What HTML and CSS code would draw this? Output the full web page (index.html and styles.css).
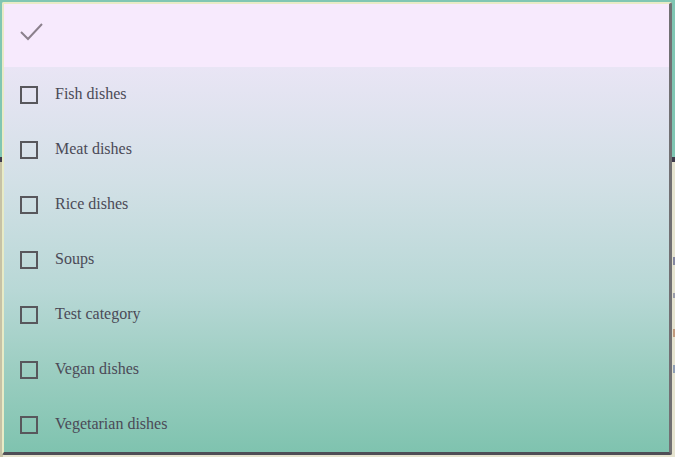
FILE: index.html
```html
<!DOCTYPE html>
<html>
<head>
<meta charset="utf-8">
<link rel="stylesheet" href="styles.css">
</head>
<body>
<div class="page">
  <header class="page-top"></header>
  <div class="page-bar"></div>
  <main class="page-content">
    <div class="bg-line"><span class="frag frag-a"></span><span class="frag frag-b"></span></div>
    <div class="bg-line"><span class="frag frag-c"></span></div>
    <div class="bg-line"><span class="frag frag-d"></span></div>
    <div class="bg-line"><span class="frag frag-e"></span></div>
  </main>
</div>

<div class="menu">
  <div class="menu-head">
    <svg class="check" width="24" height="20" viewBox="0 0 24 20">
      <polyline points="1,11 8,18 22,3" fill="none" stroke="#8b808c" stroke-width="2"/>
    </svg>
  </div>
  <ul class="menu-list">
    <li class="item"><span class="box"></span><span class="label">Fish dishes</span></li>
    <li class="item"><span class="box"></span><span class="label">Meat dishes</span></li>
    <li class="item"><span class="box"></span><span class="label">Rice dishes</span></li>
    <li class="item"><span class="box"></span><span class="label">Soups</span></li>
    <li class="item"><span class="box"></span><span class="label">Test category</span></li>
    <li class="item"><span class="box"></span><span class="label">Vegan dishes</span></li>
    <li class="item"><span class="box"></span><span class="label">Vegetarian dishes</span></li>
  </ul>
</div>
</body>
</html>
```

FILE: styles.css
```css
html, body {
  margin: 0;
  padding: 0;
}
body {
  width: 675px;
  height: 457px;
  overflow: hidden;
  font-family: "Liberation Serif", "DejaVu Serif", serif;
  position: relative;
  background: #e4e2cd;
}
.page {
  display: flex;
  flex-direction: column;
  height: 457px;
}
.page-top {
  height: 157px;
  background: #80c6b3;
}
.page-bar {
  height: 5px;
  background: #3f3b4c;
}
.page-content {
  flex: 1;
  background: #e6e4d0;
  border-left: 3px solid #c6c2a6;
  padding-top: 95px;
  display: flex;
  flex-direction: column;
  gap: 22px;
}
.bg-line {
  display: flex;
  height: 14px;
}
.frag {
  display: block;
  width: 2px;
  height: 8px;
  opacity: 0.7;
}
.frag-a { background: #7a5a78; }
.frag-b { background: #5a5f8a; margin-left: auto; }
.frag-c { background: #7a7f9a; margin-left: auto; height: 5px; }
.frag-d { background: #b07a5a; margin-left: auto; }
.frag-e { background: #6a80a8; margin-left: auto; }

.menu {
  position: absolute;
  left: 2px;
  top: 2px;
  width: 665px;
  border-left: 2px solid #e8ebc6;
  border-top: 2px solid #e8ebc6;
  border-right: 3px solid #717073;
  border-bottom: 3px solid #4f4e56;
  border-radius: 2px;
  background: #f7eafd;
}
.menu-head {
  height: 63px;
  background: #f7eafd;
  display: flex;
  align-items: flex-start;
  padding: 17px 0 0 16px;
  box-sizing: border-box;
}
.check {
  display: block;
}
.menu-list {
  list-style: none;
  margin: 0;
  padding: 0;
  background: linear-gradient(to bottom, #e9e5f5 0%, #d2e0e6 30%, #b8d8d6 58%, #9acdc0 80%, #7fc3af 100%);
}
.item {
  height: 55px;
  display: flex;
  align-items: center;
  padding-left: 16px;
}
.box {
  width: 14px;
  height: 14px;
  border: 2px solid #58575c;
  flex: none;
}
.label {
  margin-left: 17px;
  font-size: 16px;
  color: #4b4a57;
  line-height: 1;
  position: relative;
  top: -1px;
}
```
